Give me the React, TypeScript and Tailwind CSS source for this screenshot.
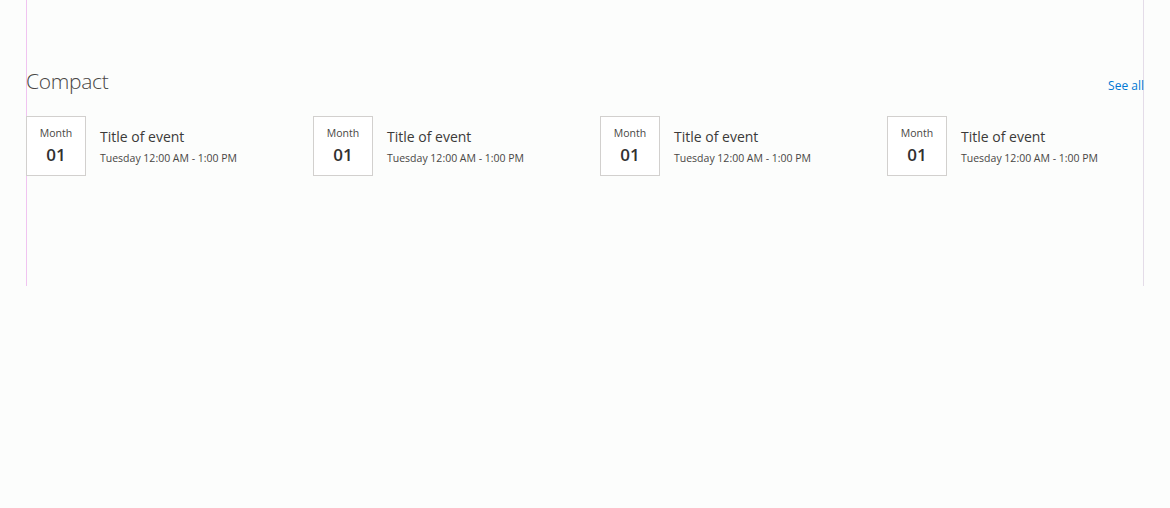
import React from "react";

const events = [1, 2, 3, 4].map((i) => ({
  id: i,
  month: "Month",
  day: "01",
  title: "Title of event",
  time: "Tuesday 12:00 AM - 1:00 PM",
}));

function EventCard({ event }: { event: (typeof events)[number] }) {
  return (
    <div className="flex w-[287px] shrink-0 flex-row items-start">
      <div className="flex h-[60px] w-[60px] shrink-0 flex-col items-center border border-[#d2d0ce] bg-white pt-[9px]">
        <span className="text-[10.5px] leading-[14px] text-[#484644]">{event.month}</span>
        <span className="mt-[4px] text-[17px] font-semibold leading-[22px] text-[#323130]">
          {event.day}
        </span>
      </div>
      <div className="ml-[14px] flex flex-col pt-[11px]">
        <span className="text-[14px] leading-[19px] text-[#3b3a39]">{event.title}</span>
        <span className="mt-[5px] text-[10.5px] leading-[15px] text-[#484644]">{event.time}</span>
      </div>
    </div>
  );
}

export default function App() {
  return (
    <div className="h-[508px] w-full bg-[#fcfdfc] font-['Open_Sans',sans-serif]">
      <div className="ml-[26px] h-[286px] w-[1118px] shadow-[inset_1px_0_0_#f0c4f0,inset_-1px_0_0_#e4dce8]">
        <div className="flex flex-row items-end justify-between pt-[66px]">
          <h2 className="text-[21px] font-light leading-[30px] tracking-[-0.3px] text-[#484644]">
            Compact
          </h2>
          <a href="#" className="mb-[1px] text-[12px] leading-[18px] text-[#0078d4]">
            See all
          </a>
        </div>
        <div className="mt-[20px] flex flex-row">
          {events.map((event) => (
            <EventCard key={event.id} event={event} />
          ))}
        </div>
      </div>
    </div>
  );
}
